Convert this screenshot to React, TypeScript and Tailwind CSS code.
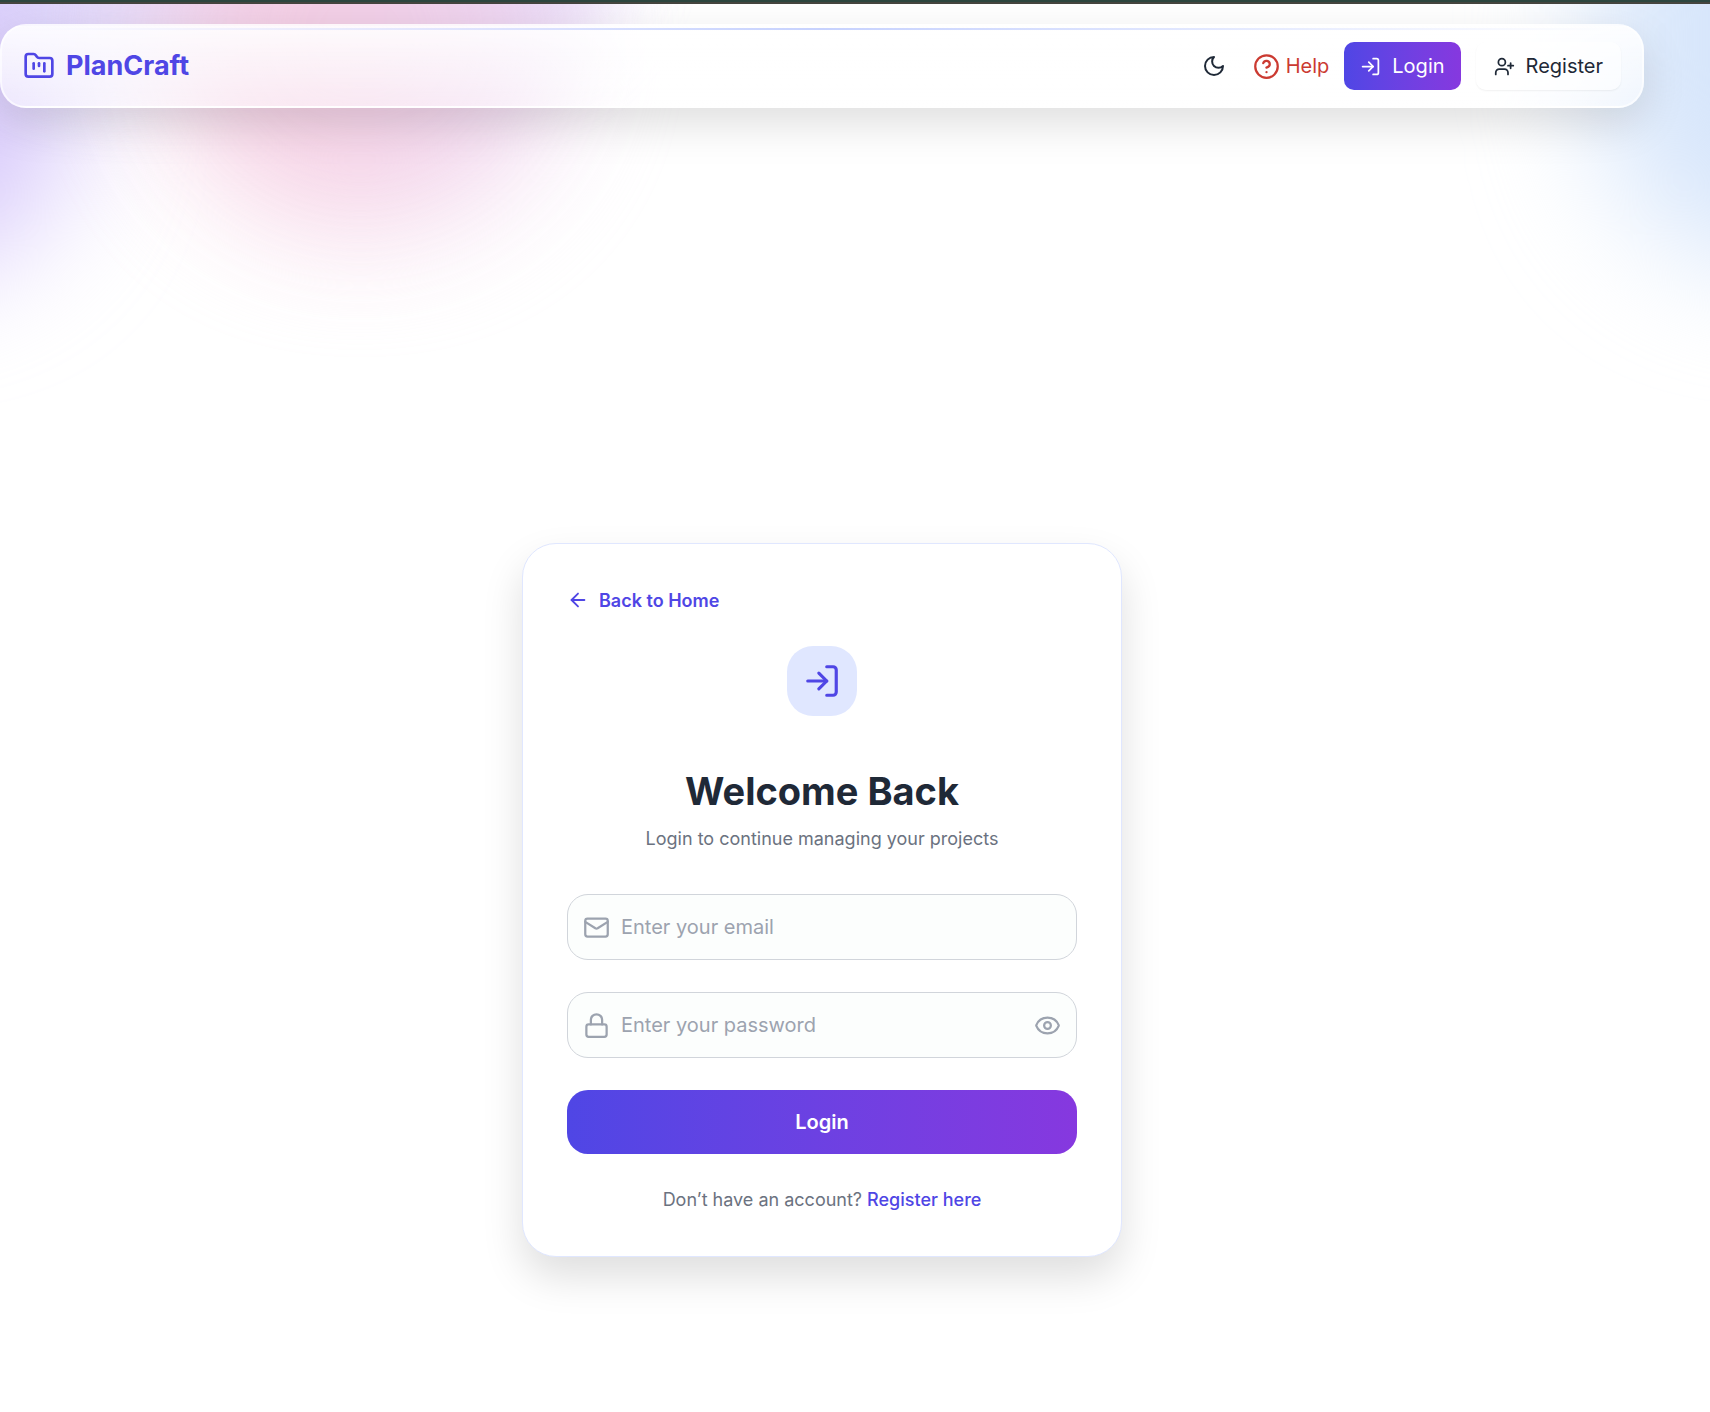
import React from "react";
import { ArrowLeft, CircleQuestionMark, Eye, FolderKanban, Lock, LogIn, Mail, UserPlus } from "lucide-react";

function MoonIcon() {
  return (
    <svg width="24" height="24" viewBox="0 0 24 24" fill="none" stroke="currentColor" strokeWidth="2" strokeLinecap="round" strokeLinejoin="round">
      <path d="M12 3a6 6 0 0 0 9 9 9 9 0 1 1-9-9Z" />
    </svg>
  );
}

function Backdrop() {
  return (
    <div aria-hidden="true" className="pointer-events-none absolute inset-0 -z-10 overflow-hidden">
      <div className="absolute -left-64 -top-44 h-[450px] w-[330px] rounded-full bg-[#d8cafb] blur-[60px]" />
      <div className="absolute -left-10 -top-56 h-[300px] w-[660px] rounded-full bg-[#d9d0fa] opacity-70 blur-[40px]" />
      <div className="absolute left-[160px] -top-40 h-[390px] w-[400px] rounded-full bg-linear-to-r from-[#f5cde2] from-40% to-[#ecd2f0] opacity-90 blur-[60px]" />
      <div className="absolute -right-64 -top-48 h-[460px] w-[370px] rounded-full bg-[#d7e6fb] blur-[60px]" />
    </div>
  );
}

function Header() {
  return (
    <header className="relative flex h-[84px] items-center justify-between rounded-[26px] border-2 border-white/60 bg-linear-to-b from-white/90 to-white/50 px-[21px] shadow-[0_16px_44px_rgba(0,0,0,0.13)]">
      <div className="absolute inset-x-6 top-[2px] h-[2px] bg-linear-to-r from-transparent via-[#c7d2fe] to-transparent" />
      <a href="#" className="flex items-center gap-[11px] text-[27px] font-bold text-[#4f46e5]">
        <FolderKanban size={32} />
        PlanCraft
      </a>
      <nav className="flex items-center gap-[15px] text-[20px] text-[#1f2937]">
        <button type="button" aria-label="Toggle dark mode" className="px-3">
          <MoonIcon />
        </button>
        <a href="#" className="flex items-center gap-[6px] text-[#cb3a31]">
          <CircleQuestionMark size={27} />
          Help
        </a>
        <button type="button" className="flex h-12 items-center gap-[11px] rounded-[10px] bg-linear-to-r from-[#4f46e5] to-[#8638df] px-4 text-white">
          <LogIn size={21} />
          Login
        </button>
        <button type="button" className="flex h-12 items-center gap-[11px] rounded-[10px] bg-white/50 px-[18px] shadow-[0_1px_2px_rgba(0,0,0,0.06)]">
          <UserPlus size={21} />
          Register
        </button>
      </nav>
    </header>
  );
}

type FieldProps = {
  id: string;
  label: string;
  type: string;
  icon: React.ReactNode;
  action?: React.ReactNode;
};

function Field({ id, label, type, icon, action }: FieldProps) {
  return (
    <div className="flex h-[66px] items-center gap-[11px] rounded-[21px] border border-[#d1d5db] bg-[#fcfefd] px-[15px] text-[#9ca3af]">
      <label htmlFor={id} aria-label={label}>{icon}</label>
      <input
        id={id}
        type={type}
        placeholder={label}
        className="min-w-0 flex-1 bg-transparent text-[20px] text-[#1f2937] outline-none placeholder:text-[#9ca3af]"
      />
      {action}
    </div>
  );
}

function LoginCard() {
  return (
    <section className="w-full max-w-[600px] rounded-[34px] border border-[#e0e7ff] bg-white px-11 pt-[42px] pb-[42px] shadow-[0_20px_40px_rgba(0,0,0,0.13)]">
      <a href="#" className="flex h-7 items-center gap-[10px] text-[18px] font-semibold text-[#4f46e5]">
        <ArrowLeft size={22} />
        Back to Home
      </a>
      <div className="mx-auto mt-8 flex size-[70px] items-center justify-center rounded-[26px] bg-[#e0e7ff] text-[#4f46e5]">
        <LogIn size={38} />
      </div>
      <h1 className="mt-[51px] text-center text-[38px] leading-[48px] font-bold text-[#1f2937]">Welcome Back</h1>
      <p className="mt-[10px] text-center text-[18px] leading-7 text-[#6b7280]">Login to continue managing your projects</p>
      <form className="mt-[41px] flex flex-col gap-8" onSubmit={(e) => e.preventDefault()}>
        <Field id="email" type="email" label="Enter your email" icon={<Mail size={27} />} />
        <Field
          id="password"
          type="password"
          label="Enter your password"
          icon={<Lock size={27} />}
          action={
            <button type="button" aria-label="Show password">
              <Eye size={27} />
            </button>
          }
        />
        <button type="submit" className="h-16 rounded-[21px] bg-linear-to-r from-[#4f46e5] to-[#8638df] text-[20px] font-semibold text-white">
          Login
        </button>
      </form>
      <p className="mt-8 text-center text-[18px] leading-7 text-[#6b7280]">
        Don’t have an account? <a href="#" className="font-medium text-[#4f46e5]">Register here</a>
      </p>
    </section>
  );
}

export default function App() {
  return (
    <div className="relative isolate min-h-screen overflow-hidden bg-white pr-[66px] font-['Inter',sans-serif]">
      <Backdrop />
      <div className="-mr-[66px] h-1 border-b-2 border-[#45453f] bg-[#2d463f]" />
      <div className="pt-5">
        <Header />
      </div>
      <main className="flex justify-center px-4 pt-[435px] pb-16">
        <LoginCard />
      </main>
    </div>
  );
}
